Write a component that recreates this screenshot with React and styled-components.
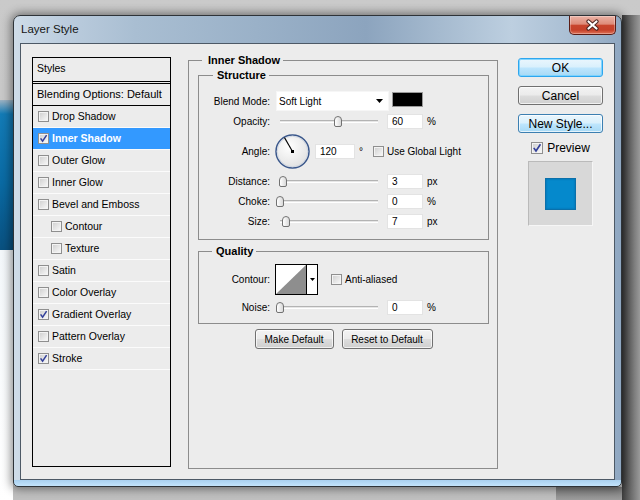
import React from 'react';
import styled, { createGlobalStyle } from 'styled-components';

const GlobalStyle = createGlobalStyle`
  html, body { margin: 0; padding: 0; }
  body {
    font-family: "Liberation Sans", Arial, sans-serif;
    font-size: 11px;
    color: #000;
    background: #c4c4c4;
  }
  * { box-sizing: border-box; }
`;

const Desktop = styled.div`
  width: 640px;
  height: 500px;
  overflow: hidden;
  padding: 15px 0 0 13px;
  background:
    linear-gradient(90deg, #3c3c3c 0%, #5d5d5d 35%, #9a9a9a 100%) 622px 15px / 18px 485px no-repeat,
    linear-gradient(180deg, #7c7c7c, #9c9c9c) 556px 487px / 66px 13px no-repeat,
    linear-gradient(180deg, #9db2c2 0, #137bb6 14px, #0a6aa3 55%, #09507f 100%) 0 100px / 13px 150px no-repeat,
    linear-gradient(180deg, #f3f7fa, #ffffff) 0 250px / 13px 250px no-repeat,
    linear-gradient(180deg, #cacaca, #bfbfbf);
`;

const Window = styled.div`
  width: 609px;
  height: 472px;
  display: flex;
  flex-direction: column;
  padding: 0 6px 6px;
  border: 1px solid #2e3338;
  border-radius: 7px 7px 5px 5px;
  background:
    linear-gradient(0deg, #c3e3fb 0, #a9d0ef 6px, transparent 6px),
    linear-gradient(90deg, #cfdce8 0%, #bccdde 8%, #a9bed2 20%, #9ab1c8 40%, #8ca4be 58%, #a5bacf 70%, #bdcfe0 82%, #a9bed3 92%, #8fa7c1 100%);
  box-shadow: 0 0 10px 2px rgba(0, 0, 0, 0.45);
`;

const TitleBar = styled.div`
  height: 27px;
  display: flex;
  justify-content: space-between;
  align-items: flex-start;
  margin-right: -1px;
`;

const Title = styled.div`
  line-height: 27px;
  padding-left: 1px;
  font-size: 11.5px;
  color: #151515;
`;

const CloseButton = styled.div`
  width: 47px;
  height: 19px;
  border: 1px solid #5a1d16;
  border-top: none;
  border-radius: 0 0 5px 5px;
  background: linear-gradient(180deg, #ebb3a6 0%, #de8b79 45%, #c8452d 52%, #c5412a 78%, #df7359 100%);
  box-shadow: inset 0 0 0 1px rgba(255, 255, 255, 0.3);
  display: flex;
  align-items: center;
  justify-content: center;
`;

const Client = styled.div`
  flex: 1;
  display: flex;
  align-items: flex-start;
  border: 1px solid #4d5966;
  background: #ececec;
  padding: 10px 11px 0;
`;

/* ---------- Styles list ---------- */

const StylesPanel = styled.div`
  width: 139px;
  height: 410px;
  margin: 3px 17px 0 0;
  flex-shrink: 0;
  border: 1px solid #000;
  background: #ececec;
  display: flex;
  flex-direction: column;
  font-size: 10.5px;
`;

const PanelHeader = styled.div`
  height: 24px;
  line-height: 21px;
  padding-left: 4px;
  border-bottom: 1px solid #000;
`;

const BlendingRow = styled.div`
  margin-top: 1px;
  height: 23px;
  line-height: 21px;
  padding-left: 4px;
  border-top: 1px solid #000;
  border-bottom: 1px solid #000;
  font-size: 11px;
`;

const StyleRow = styled.div`
  height: 22px;
  display: flex;
  align-items: center;
  gap: 3px;
  padding-left: ${p => (p.$indent ? 18 : 5)}px;
  padding-bottom: 1px;
  border-bottom: 1px solid #fbfbfb;
  background: ${p => (p.$selected ? '#3399ff' : 'transparent')};
  color: ${p => (p.$selected ? '#fff' : '#000')};
  font-weight: ${p => (p.$selected ? 'bold' : 'normal')};
`;

const BoxMark = styled.span`
  width: ${p => p.$size}px;
  height: ${p => p.$size}px;
  flex-shrink: 0;
  border: 1px solid #8f8f8f;
  background: linear-gradient(135deg, #cdcdcd 0%, #e4e4e4 50%, #fafafa 100%);
  box-shadow: inset 0 0 0 1px #f3f3f3;
  display: flex;
  align-items: center;
  justify-content: center;
`;

const CheckBox = ({ checked, size = 11 }) => (
  <BoxMark $size={size}>
    {checked && (
      <svg width={size - 2} height={size - 2} viewBox="0 0 9 9">
        <path d="M1.6 4.4 L3.6 7.2 L7.6 1.2" stroke="#33409a" strokeWidth="1.5" fill="none" />
      </svg>
    )}
  </BoxMark>
);

/* ---------- Middle groups ---------- */

const Group = styled.fieldset`
  margin: ${p => p.$margin || '0'};
  min-width: 0;
  border: 1px solid #8c8c8c;
  padding: ${p => p.$pad};
  height: ${p => (p.$height ? `${p.$height}px` : 'auto')};
  width: ${p => (p.$width ? `${p.$width}px` : 'auto')};
  flex-shrink: 0;
  font-size: 10px;
`;

const GroupTitle = styled.legend`
  font-weight: bold;
  font-size: 11px;
  line-height: 13px;
  margin-left: ${p => p.$offset}px;
  padding: 0 3px 0 ${p => p.$lead}px;
`;

const Rows = styled.div`
  display: flex;
  flex-direction: column;
  gap: 5px;
`;

const Row = styled.div`
  display: flex;
  align-items: center;
  margin-bottom: ${p => (p.$tight ? -2 : 0)}px;
`;

const Label = styled.span`
  width: 71px;
  flex-shrink: 0;
  text-align: right;
  margin-right: 5px;
`;

const Select = styled.div`
  width: 113px;
  height: 20px;
  margin-left: 1px;
  background: #fff;
  border: 1px solid #f6f6f6;
  display: flex;
  align-items: center;
  justify-content: space-between;
  padding: 0 5px 0 2px;
`;

const ColorSwatch = styled.div`
  width: 31px;
  height: 15px;
  margin: 1px 0 0 3px;
  align-self: flex-start;
  background: #000;
  border: 1px solid #9a9a9a;
`;

const SliderBox = styled.div`
  position: relative;
  width: 98px;
  height: 11px;
  margin-left: 5px;
  flex-shrink: 0;
`;

const Track = styled.div`
  margin-top: 4px;
  height: 3px;
  border-top: 1px solid #b3b3b3;
  border-bottom: 1px solid #fff;
  background: #e6e6e6;
`;

const Thumb = styled.div`
  position: absolute;
  top: 0;
  width: 8px;
  height: 11px;
  border: 1px solid #727272;
  border-radius: 4px 4px 2px 2px;
  background: linear-gradient(90deg, #ffffff, #d9d9d9);
`;

const Slider = ({ pos }) => (
  <SliderBox>
    <Track />
    <Thumb style={{ left: `${pos * 98 - 4}px` }} />
  </SliderBox>
);

const NumberBox = styled.div`
  width: ${p => p.$width || 36}px;
  height: 15px;
  margin-left: ${p => p.$gap}px;
  background: #fff;
  border: 1px solid #e3e3e3;
  padding-left: 4px;
  line-height: 13px;
  flex-shrink: 0;
`;

const Unit = styled.span`
  margin-left: 4px;
`;

const Dial = styled.div`
  width: 35px;
  height: 35px;
  flex-shrink: 0;
`;

const InlineCheck = styled.label`
  display: flex;
  align-items: center;
  gap: 3px;
  margin-left: ${p => p.$gap}px;
`;

const ContourPicker = styled.div`
  display: flex;
  height: 31px;
  border: 1px solid #000;
  background: #fff;
  flex-shrink: 0;
`;

const ContourArrow = styled.div`
  width: 11px;
  border-left: 1px solid #000;
  display: flex;
  align-items: center;
  justify-content: center;
`;

const ButtonRow = styled.div`
  display: flex;
  justify-content: center;
  gap: 8px;
  margin-top: 5px;
`;

const DialogButton = styled.div`
  width: ${p => p.$w}px;
  height: 20px;
  display: flex;
  align-items: center;
  justify-content: center;
  border: 1px solid #707070;
  border-radius: 3px;
  background: linear-gradient(180deg, #f3f3f3 0%, #ebebeb 48%, #dddddd 52%, #cfcfcf 100%);
  box-shadow: inset 0 0 0 1px rgba(255, 255, 255, 0.7);
`;

/* ---------- Right column ---------- */

const SideColumn = styled.div`
  width: 85px;
  margin-top: 4px;
  flex-shrink: 0;
  display: flex;
  flex-direction: column;
  gap: 9px;
  font-size: 12px;
`;

const SideButton = styled.div`
  height: 19px;
  display: flex;
  align-items: center;
  justify-content: center;
  border-radius: 3px;
  border: 1px solid ${p => (p.$variant === 'default' ? '#2ea6ee' : p.$variant === 'focus' ? '#3c7fb1' : '#707070')};
  background: ${p =>
    p.$variant === 'normal'
      ? 'linear-gradient(180deg, #f3f3f3 0%, #ebebeb 48%, #dddddd 52%, #cfcfcf 100%)'
      : 'linear-gradient(180deg, #eaf6fd 0%, #d9f0fc 48%, #bee6fd 52%, #a7d9f5 100%)'};
  box-shadow: inset 0 0 0 1px ${p => (p.$variant === 'default' ? 'rgba(120,210,255,0.9)' : 'rgba(255,255,255,0.7)')};
`;

const PreviewRow = styled.div`
  display: flex;
  align-items: center;
  justify-content: center;
  gap: 4px;
  height: 12px;
`;

const PreviewFrame = styled.div`
  width: 65px;
  height: 65px;
  margin-top: -2px;
  align-self: center;
  background: #d8d8d8;
  border: 1px solid;
  border-color: #bababa #f6f6f6 #f6f6f6 #bababa;
  display: flex;
  align-items: center;
  justify-content: center;
`;

const PreviewSwatch = styled.div`
  width: 31px;
  height: 32px;
  background: #0589cc;
  border: 1px solid #0b70aa;
  box-shadow: inset 0 0 2px rgba(0, 40, 90, 0.35);
`;

const styleItems = [
  { label: 'Drop Shadow' },
  { label: 'Inner Shadow', checked: true, selected: true },
  { label: 'Outer Glow' },
  { label: 'Inner Glow' },
  { label: 'Bevel and Emboss' },
  { label: 'Contour', indent: true },
  { label: 'Texture', indent: true },
  { label: 'Satin' },
  { label: 'Color Overlay' },
  { label: 'Gradient Overlay', checked: true },
  { label: 'Pattern Overlay' },
  { label: 'Stroke', checked: true },
];

const lowerSliders = [
  { label: 'Distance:', pos: 0.026, value: '3', unit: 'px' },
  { label: 'Choke:', pos: 0, value: '0', unit: '%' },
  { label: 'Size:', pos: 0.062, value: '7', unit: 'px' },
];

const angle = 120;
const rad = (angle * Math.PI) / 180;
const tipX = 17.5 + 16 * Math.cos(rad);
const tipY = 17.5 - 16 * Math.sin(rad);

export default function App() {
  return (
    <>
      <GlobalStyle />
      <Desktop>
        <Window>
          <TitleBar>
            <Title>Layer Style</Title>
            <CloseButton>
              <svg width="15" height="12" viewBox="0 0 15 12">
                <path d="M3.5 2.5 L11.5 9.5 M11.5 2.5 L3.5 9.5" stroke="#4b2420" strokeWidth="4.2" strokeLinecap="round" fill="none" />
                <path d="M3.5 2.5 L11.5 9.5 M11.5 2.5 L3.5 9.5" stroke="#ffffff" strokeWidth="2.2" strokeLinecap="round" fill="none" />
              </svg>
            </CloseButton>
          </TitleBar>
          <Client>
            <StylesPanel>
              <PanelHeader>Styles</PanelHeader>
              <BlendingRow>Blending Options: Default</BlendingRow>
              {styleItems.map(item => (
                <StyleRow key={item.label} $indent={item.indent} $selected={item.selected}>
                  <CheckBox checked={item.checked} />
                  <span>{item.label}</span>
                </StyleRow>
              ))}
            </StylesPanel>

            <Group $pad="0 8px 0 9px" $height={415} $width={310} $margin="0 20px 0 0">
              <GroupTitle $offset={4} $lead={6}>Inner Shadow</GroupTitle>
              <Group $pad="9px 0 10px 0" $margin="2px 0 0 0">
                <GroupTitle $offset={14} $lead={4}>Structure</GroupTitle>
                <Rows>
                  <Row $tight>
                    <Label>Blend Mode:</Label>
                    <Select>
                      <span>Soft Light</span>
                      <svg width="7" height="4" viewBox="0 0 7 4"><polygon points="0,0 7,0 3.5,4" fill="#000" /></svg>
                    </Select>
                    <ColorSwatch />
                  </Row>
                  <Row>
                    <Label>Opacity:</Label>
                    <Slider pos={0.59} />
                    <NumberBox $gap={9}>60</NumberBox>
                    <Unit>%</Unit>
                  </Row>
                  <Row>
                    <Label>Angle:</Label>
                    <Dial>
                      <svg width="35" height="35" viewBox="0 0 35 35">
                        <defs>
                          <radialGradient id="dialFill" cx="40%" cy="35%" r="70%">
                            <stop offset="0" stopColor="#ffffff" />
                            <stop offset="1" stopColor="#e0e0e0" />
                          </radialGradient>
                        </defs>
                        <circle cx="17.5" cy="17.5" r="16.5" fill="url(#dialFill)" stroke="#3a578b" strokeWidth="1.5" />
                        <circle cx="17.5" cy="17.5" r="15.3" fill="none" stroke="#c9d2de" strokeWidth="0.8" />
                        <line x1="17.5" y1="17.5" x2={tipX} y2={tipY} stroke="#000" strokeWidth="1.1" />
                        <rect x="16" y="16" width="3" height="3" fill="#000" />
                      </svg>
                    </Dial>
                    <NumberBox $gap={5} $width={40}>120</NumberBox>
                    <Unit>°</Unit>
                    <InlineCheck $gap={10}>
                      <CheckBox />
                      <span>Use Global Light</span>
                    </InlineCheck>
                  </Row>
                  {lowerSliders.map(s => (
                    <Row key={s.label}>
                      <Label>{s.label}</Label>
                      <Slider pos={s.pos} />
                      <NumberBox $gap={9}>{s.value}</NumberBox>
                      <Unit>{s.unit}</Unit>
                    </Row>
                  ))}
                </Rows>
              </Group>

              <Group $pad="6px 0 8px 0" $margin="5px 0 0 0">
                <GroupTitle $offset={13} $lead={4}>Quality</GroupTitle>
                <Rows>
                  <Row>
                    <Label>Contour:</Label>
                    <ContourPicker>
                      <svg width="30" height="29" viewBox="0 0 30 29">
                        <polygon points="0,29 30,0 30,29" fill="#8e8e8e" />
                      </svg>
                      <ContourArrow>
                        <svg width="5" height="3" viewBox="0 0 5 3"><polygon points="0,0 5,0 2.5,3" fill="#000" /></svg>
                      </ContourArrow>
                    </ContourPicker>
                    <InlineCheck $gap={13}>
                      <CheckBox />
                      <span>Anti-aliased</span>
                    </InlineCheck>
                  </Row>
                  <Row>
                    <Label>Noise:</Label>
                    <Slider pos={0} />
                    <NumberBox $gap={9}>0</NumberBox>
                    <Unit>%</Unit>
                  </Row>
                </Rows>
              </Group>

              <ButtonRow>
                <DialogButton $w={79}>Make Default</DialogButton>
                <DialogButton $w={91}>Reset to Default</DialogButton>
              </ButtonRow>
            </Group>

            <SideColumn>
              <SideButton $variant="default">OK</SideButton>
              <SideButton $variant="normal">Cancel</SideButton>
              <SideButton $variant="focus">New Style...</SideButton>
              <PreviewRow>
                <CheckBox checked size={12} />
                <span>Preview</span>
              </PreviewRow>
              <PreviewFrame>
                <PreviewSwatch />
              </PreviewFrame>
            </SideColumn>
          </Client>
        </Window>
      </Desktop>
    </>
  );
}
